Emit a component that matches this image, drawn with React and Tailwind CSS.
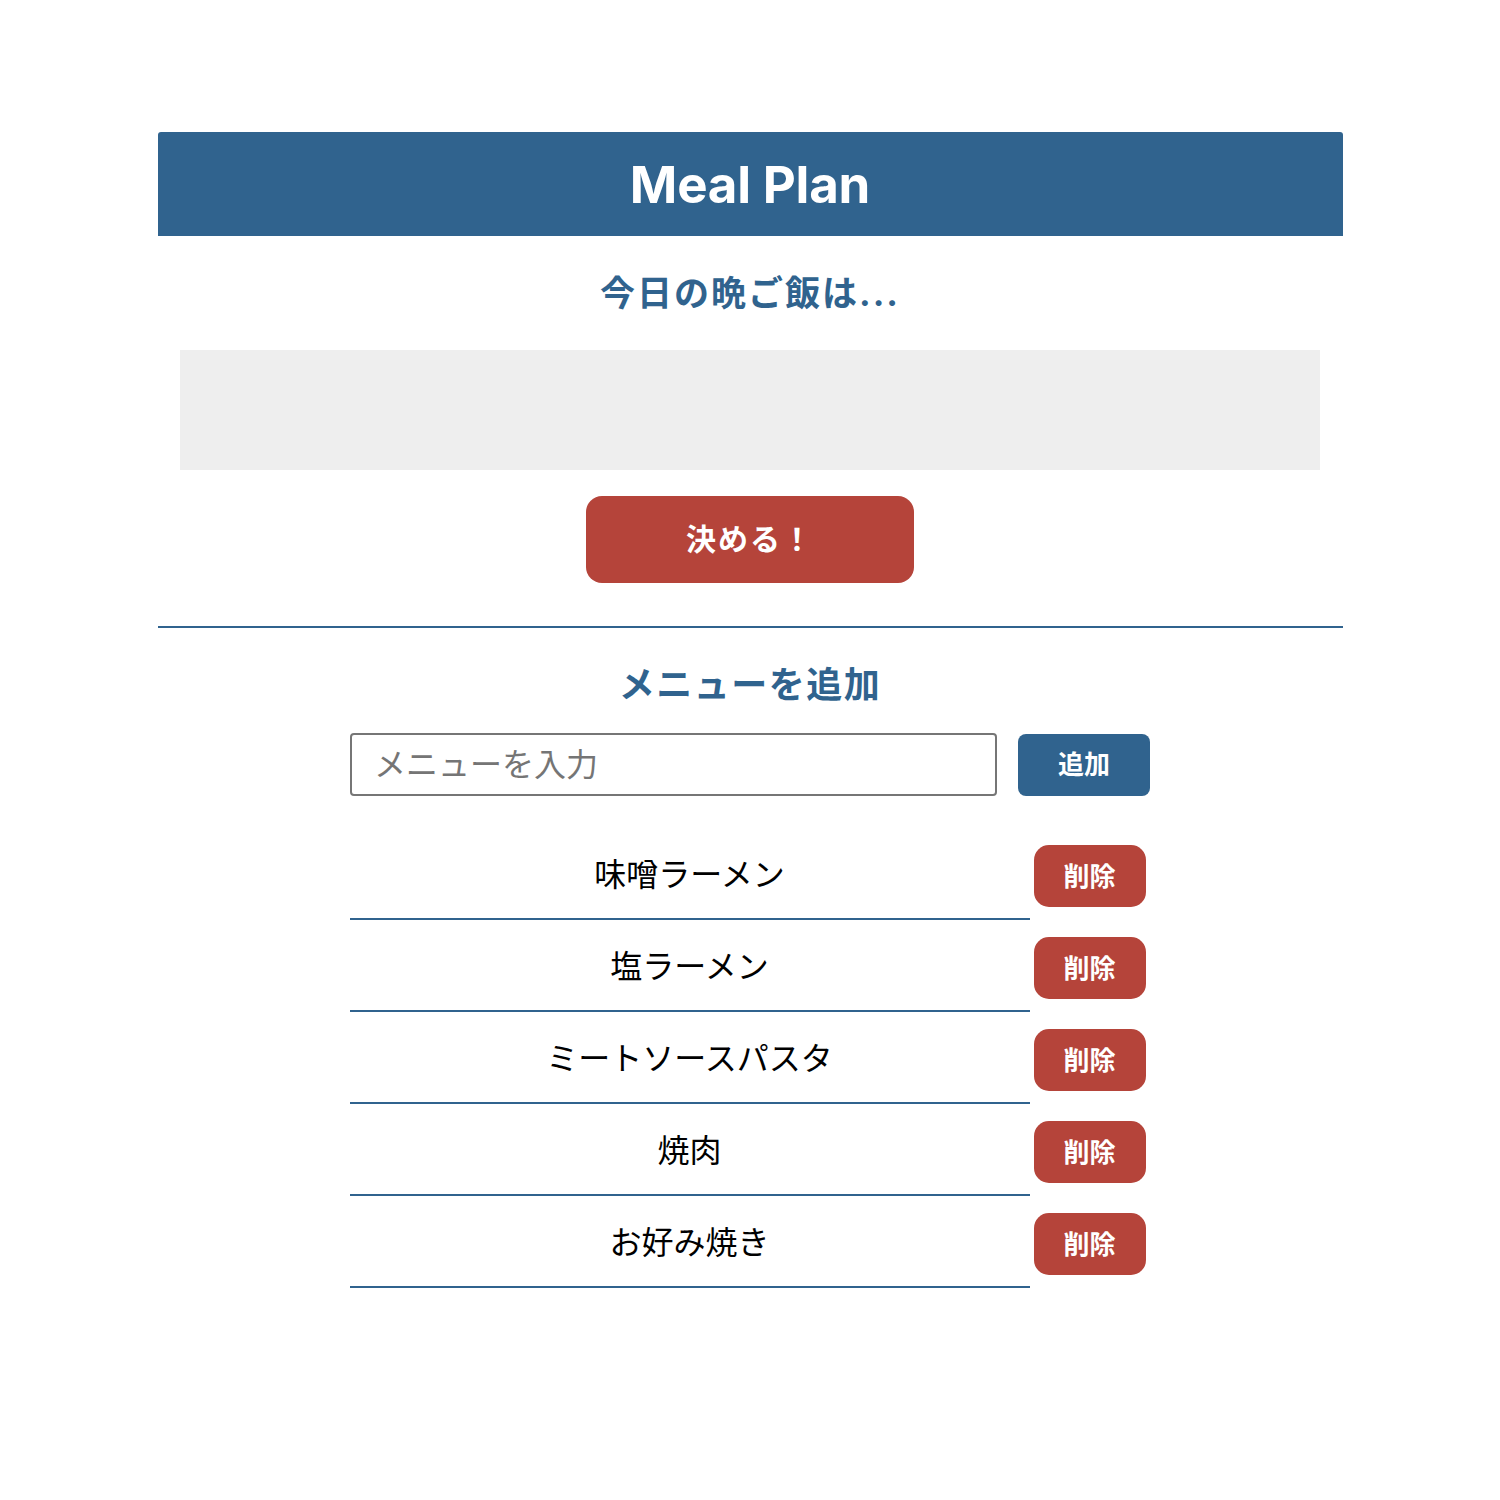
import { useState } from 'react';

const FONT = { fontFamily: 'Inter, "Noto Sans CJK JP", sans-serif' };

const INITIAL = ['味噌ラーメン', '塩ラーメン', 'ミートソースパスタ', '焼肉', 'お好み焼き'];

export default function App() {
  const [menus, setMenus] = useState(INITIAL);
  const [input, setInput] = useState('');
  const [picked, setPicked] = useState('');

  const addMenu = () => {
    if (!input.trim()) return;
    setMenus(prev => [...prev, input.trim()]);
    setInput('');
  };

  const pick = () => {
    if (!menus.length) return;
    setPicked(menus[Math.floor(Math.random() * menus.length)]);
  };

  return (
    <div className="min-h-[1500px] bg-white pt-[132px]" style={FONT}>
      <div className="mx-auto w-[1185px]">
        {/* Header */}
        <header className="h-[104px] bg-[#30638e] rounded-t-[3px] flex items-center justify-center">
          <h1 className="text-[51px] font-bold text-white tracking-[-0.2px] mt-[2px]">Meal Plan</h1>
        </header>

        {/* Result */}
        <section className="flex flex-col items-center">
          <h2 className="mt-[33px] h-[48px] text-[35px] leading-[48px] font-bold text-[#30638e] tracking-[2px]">今日の晩ご飯は...</h2>
          <div className="mt-[33px] w-[1140px] h-[120px] bg-[#eeeeee] flex items-center justify-center text-[40px] font-bold text-[#30638e]">
            {picked}
          </div>
          <button
            onClick={pick}
            className="mt-[26px] w-[328px] h-[87px] rounded-[16px] bg-[#b5443a] text-white text-[30px] font-bold tracking-[2px]"
          >
            決める！
          </button>
        </section>

        <hr className="mt-[43px] border-0 h-[2px] bg-[#30638e]" />

        {/* Add menu */}
        <section className="flex flex-col items-center">
          <h2 className="mt-[35px] h-[44px] text-[36px] leading-[44px] font-bold text-[#30638e] tracking-[1.5px]">メニューを追加</h2>
          <div className="mt-[26px] flex items-center gap-[21px]">
            <input
              value={input}
              onChange={e => setInput(e.target.value)}
              placeholder="メニューを入力"
              className="w-[647px] h-[63px] border-2 border-[#767676] rounded-[4px] px-[22px] text-[32px] placeholder:text-[#757575] outline-none"
            />
            <button
              onClick={addMenu}
              className="w-[132px] h-[62px] rounded-[8px] bg-[#30638e] text-white text-[26px] font-bold"
            >
              追加
            </button>
          </div>

          <ul className="mt-[32px] self-start ml-[192px]">
            {menus.map((m, i) => (
              <li key={i} className="flex items-center h-[92px] gap-[4px]">
                <div className="w-[680px] h-full flex items-center justify-center border-b-2 border-[#30638e] text-[32px] text-black pt-[3px]">
                  {m}
                </div>
                <button
                  onClick={() => setMenus(prev => prev.filter((_, j) => j !== i))}
                  className="w-[112px] h-[62px] rounded-[15px] bg-[#b5443a] text-white text-[26px] font-bold mt-[4px]"
                >
                  削除
                </button>
              </li>
            ))}
          </ul>
        </section>
      </div>
    </div>
  );
}
